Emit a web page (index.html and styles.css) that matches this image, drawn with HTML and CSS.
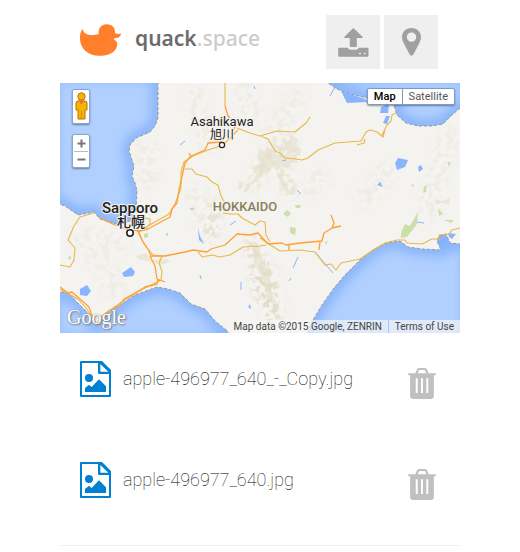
FILE: index.html
```html
<!DOCTYPE html>
<html lang="en">
    <head>
        <meta charset="UTF-8" />
        <meta name="viewport" content="width=device-width, initial-scale=1.0" />
        <title>quack.space</title>
        <link rel="stylesheet" href="styles.css">
    </head>
    <body>
        <div class="wrap">
            <!-- header -->
            <header class="top">
                <a class="logo" href="#">
                    <svg class="duck" viewBox="60 72 124 96" aria-hidden="true">
                        <path d="M68 87C70 98 78 104 90 105C98 106 108 104 117 102C114 88 122 72 141 72C156 72 166 83 166 94C166 98 165 99 168 100C174 102 180 102 184 100C183 110 176 113 168 114C162 116 161 118 166 121C171 124 174 130 172 138C168 157 146 168 118 168C88 168 62 150 60 118C59 105 62 94 68 87Z"/>
                    </svg>
                    <span class="name">quack<span class="ext">.space</span></span>
                </a>
                <nav class="tools">
                    <button class="tbtn" type="button" aria-label="Upload">
                        <svg width="31" height="29" viewBox="84 82 92 87">
                            <path d="M129 83Q131 83 133 85L157 108Q160 112 156 112H140V136Q140 139 137 139H122Q119 139 119 136V112H104Q100 112 103 108L126 85Q128 83 129 83Z"/>
                            <path fill-rule="evenodd" d="M87 141H113Q116 147 122 147H137Q143 147 146 141H172Q175 141 175 144V165Q175 168 172 168H87Q84 168 84 165V144Q84 141 87 141ZM147 156V161H152V156ZM161 156V161H166V156Z"/>
                        </svg>
                    </button>
                    <button class="tbtn" type="button" aria-label="Location">
                        <svg width="19" height="28" viewBox="275 86 56 83">
                            <path fill-rule="evenodd" d="M303 86C320 86 331 98 331 113C331 120 329 125 326 131L309 164Q303 172 297 164L280 131C277 125 275 120 275 113C275 98 286 86 303 86ZM303 99A14 14 0 1 0 303 127A14 14 0 1 0 303 99Z"/>
                        </svg>
                    </button>
                </nav>
            </header>

            <!-- map -->
            <section class="map">
                <svg class="land" viewBox="0 0 400 250" preserveAspectRatio="xMidYMid slice" role="img" aria-label="Map of Hokkaido">
                    <defs>
                        <path id="sea" d="M-9 -9H98V35L95 43L90 49L83 52L76 55L70 62L69 68L72 77L74 83L72 93L75 100L77 108L76 125L70 138L60 142L52 140L40 136L34 129L18 132L5 123L-9 118ZM-9 210L3 209L10 211L17 219L25 227L33 236L37 242L45 232L60 222L75 212L97 204L108 206L120 210L131 221L145 226L155 238L170 250V260H-9ZM247 260V250L253 237L262 222L274 205L285 192L300 177L313 167L327 160L340 158L348 164L362 166L381 167L377 158L379 153L386 151L390 160L409 162V260ZM268 -9V0L277 6L290 11L307 15L325 20L334 22L337 32L346 40L358 43L372 43L383 41L392 32L400 25H409V-9Z"/>
                        <clipPath id="seaClip"><use href="#sea"/></clipPath>
                        <filter id="soft" x="-20%" y="-20%" width="140%" height="140%"><feGaussianBlur stdDeviation="6"/></filter>
                        <filter id="blur" x="-20%" y="-20%" width="140%" height="140%"><feGaussianBlur stdDeviation="4"/></filter>
                        <!-- hill shading -->
                        <filter id="relief" x="0" y="0" width="100%" height="100%">
                            <feTurbulence type="fractalNoise" baseFrequency=".16" numOctaves="3" seed="8"/>
                            <feColorMatrix values="0 0 0 0 .76 0 0 0 0 .72 0 0 0 0 .58 8 0 0 0 -3.8"/>
                        </filter>
                        <mask id="hills">
                            <g fill="none" stroke="#fff" stroke-linecap="round" filter="url(#blur)">
                                <g opacity=".3" stroke-width="22">
                                    <path d="M85 65L90 95M135 15L150 60M135 110L150 150M35 170L55 205M235 15L210 55M185 5L190 30M260 95L250 105M325 90L305 115M388 55L370 125M20 155L60 160"/>
                                </g>
                                <path stroke-width="13" d="M192 160L198 205L214 240M206 180L218 225"/>
                                <path opacity=".7" stroke-width="16" d="M230 60L205 80L195 100M225 90L230 110M155 125L150 150"/>
                            </g>
                        </mask>
                    </defs>
                    <rect class="ground" x="-20" y="-20" width="440" height="290"/>
                    <g class="heath">
                        <path d="M200 65L204 70L207 63L211 68L216 65L217 72L224 73L228 67L231 72L240 68L236 75L238 80L231 80L228 86L222 83L217 88L213 84L207 91L203 90L198 98L191 101L189 107L183 110L187 101L193 98L196 92L193 86L200 80L197 74Z"/>
                        <path d="M222 54L228 58L232 53L238 56L236 62L241 66L240 73L234 69L230 72L226 65ZM216 90L222 92L226 102L232 112L226 108L220 98ZM192 158L198 160L202 175L210 190L212 210L220 228L214 224L206 212L202 195L194 180Z"/>
                        <path d="M179 99L184 98L182 105L178 107ZM76 173L86 170L91 177L108 176L110 179L101 182L92 179L78 176ZM375 116L382 118L390 115L389 122L382 120L376 121Z"/>
                    </g>
                    <rect width="400" height="250" filter="url(#relief)" mask="url(#hills)"/>
                    <g class="park">
                        <path d="M341 150L345 141L350 143L358 129L357 141L347 154L341 155ZM230 144L236 145L235 152L230 150ZM223 131L227 127L231 130L228 134ZM84 151L88 150L88 154L84 155ZM364 104L367 102L366 109L363 110ZM351 101L354 102L353 105ZM388 79L390 79L390 83L388 82ZM378 125L383 131L379 133ZM384 137L394 137L391 140ZM265 159L268 158L266 162ZM8 174L11 173L11 176L9 177ZM235 122L241 122L240 125L236 125Z"/>
                    </g>
                    <g class="lake">
                        <path d="M62 190L71 184L75 189L73 193L64 194ZM20 206L27 202L31 208L27 213L20 212ZM335 80L338 75L348 77L345 84L337 87ZM358 84L361 82L363 86L359 89ZM317 102L320 99L323 104ZM321 24L329 21L328 30L320 30ZM323 40L326 33L330 33L327 41ZM281 8L305 16L309 19L287 20ZM138 145L140 153L144 161L139 157ZM388 150L396 151L392 156L389 154ZM188 224L190 221L191 226Z"/>
                        <path class="river" d="M270 13L275 4M120 62L125 58M194 3L195 6M107 150V153M140 192L141 196M181 199V207M229 198L231 195M222 78L226 77M237 107L241 111M233 185L238 174M357 139L364 140M255 169L273 190M170 142L176 138M130 126H134"/>
                    </g>
                    <use class="water" href="#sea"/>
                    <g clip-path="url(#seaClip)"><use class="shallow" href="#sea" filter="url(#soft)"/></g>
                    <use class="coast" href="#sea"/>

                    <!-- roads -->
                    <path class="road" d="M165 0V23M177 45L190 50L200 53L217 48L235 49L246 40L250 34M200 53L208 56L215 68L220 70L225 75L236 76L242 77L248 75L258 67L275 60L301 58L306 49L310 47L317 49L323 54L325 47M297 62L304 60L305 56M322 52L327 42L331 38L332 32L336 30M178 47L163 62L148 67L133 73L124 79L121 89L121 105L115 121L109 131L88 143L78 149M125 86L132 86L136 91L147 94L152 99L158 102L161 113L165 120M163 130L170 131L178 131L182 135L195 142L200 138L205 139L206 152L210 159M34 130L20 134L14 143L8 157L15 165L14 177L10 184L0 182M138 169L142 174L152 172L160 174L170 172L183 164L200 163L206 162M200 155L212 163L220 168L240 167L255 169L265 182L271 181L276 187L281 180L295 177L300 176L313 167L325 160L337 157L345 157L347 160L362 161L372 156L379 156L379 152L389 151L392 147L400 145M85 135L90 136L90 141L84 147M76 145L84 161L93 172L102 173L99 180L102 188L101 197L83 206L63 218L45 231L39 241M34 237L26 225L18 216L0 206"/>
                    <path class="highway" d="M165 23L168 33L176 42L171 51M162 59L148 60L145 67L131 73L125 80L119 107L117 120L112 126L110 134L88 146L80 148L66 146L55 142L40 135M129 70L131 74M78 147L82 157L89 168L91 173L105 173L125 169L133 167L147 169L151 166L165 162L177 151L190 152L198 150L208 161L222 160L226 162L240 160L262 158L264 150L272 145L281 143M272 145L274 140L271 132M260 159L259 167M229 162V167M90 173L95 183L97 196L105 199M98 196L97 201L85 204L75 210L64 216L60 222L50 227L42 233L36 243M34 238L29 224L20 216L12 209L8 210L0 204"/>

                    <!-- places -->
                    <circle class="dot" cx="162" cy="62" r="2.6"/>
                    <circle class="dot big" cx="70" cy="150" r="3.2"/>
                    <g class="place">
                        <text class="kanji" x="162" y="56">旭川</text>
                        <text x="162" y="43">Asahikawa</text>
                        <text class="kanji city" x="71" y="144">札幌</text>
                        <text class="city" x="70" y="130">Sapporo</text>
                        <text class="region" x="185" y="128">HOKKAIDO</text>
                    </g>
                </svg>

                <div class="pan">
                    <button class="pegman" type="button" aria-label="Street View">
                        <svg width="13" height="29" viewBox="0 0 13 29">
                            <g fill="#f5b400" stroke="#bb7004">
                                <path d="M3 9H10Q12 9 12 11V18H10V27H3V18H1V11Q1 9 3 9Z"/>
                                <circle cx="6.500" cy="4.500" r="3.700"/>
                            </g>
                            <path fill="#e76f51" d="M3.500 8.500H9.500L6.500 12.500Z"/>
                            <path stroke="#d88a05" d="M6.500 19V27"/>
                        </svg>
                    </button>
                    <div class="zoom">
                        <button type="button" aria-label="Zoom in">
                            <svg width="9" height="9" viewBox="0 0 9 9"><path d="M.5 4.500H8.500M4.500 .5V8.500"/></svg>
                        </button>
                        <button type="button" aria-label="Zoom out">
                            <svg width="9" height="9" viewBox="0 0 9 9"><path d="M.5 4.500H8.500"/></svg>
                        </button>
                    </div>
                </div>

                <div class="types">
                    <button class="on" type="button">Map</button>
                    <button type="button">Satellite</button>
                </div>

                <a class="google" href="#">Google</a>
                <div class="credit">
                    <span>Map data ©2015 Google, ZENRIN</span>
                    <a href="#">Terms of Use</a>
                </div>
            </section>

            <!-- file list -->
            <svg class="defs" aria-hidden="true">
                <symbol id="pic" viewBox="60 48 93 108">
                    <path fill-rule="evenodd" d="M63 48H126L153 75V153Q153 156 150 156H63Q60 156 60 153V51Q60 48 63 48ZM66 54V150H147V87H117Q114 87 114 84V54ZM121 57V80H145Z"/>
                    <circle cx="87" cy="99" r="12"/>
                    <path d="M75 141V129L87 119L95 126L117 103L138 124V141Z"/>
                </symbol>
                <symbol id="bin" viewBox="54 53 84 94">
                    <path fill-rule="evenodd" d="M76 69L80 58Q82 53 87 53H105Q110 53 112 58L116 69H138V75H132V137Q132 147 122 147H70Q60 147 60 137V75H54V69ZM83 69H109L106 61Q105 59 103 59H89Q87 59 86 61ZM77 84V129H83V84ZM93 84V129H99V84ZM109 84V129H115V84Z"/>
                </symbol>
            </svg>
            <ul class="files">
                <li class="file">
                    <svg class="pic"><use href="#pic"/></svg>
                    <a class="fname" href="#">apple-496977_640_-_Copy.jpg</a>
                    <button class="del" type="button" aria-label="Delete apple-496977_640_-_Copy.jpg"><svg class="bin"><use href="#bin"/></svg></button>
                </li>
                <li class="file">
                    <svg class="pic"><use href="#pic"/></svg>
                    <a class="fname" href="#">apple-496977_640.jpg</a>
                    <button class="del" type="button" aria-label="Delete apple-496977_640.jpg"><svg class="bin"><use href="#bin"/></svg></button>
                </li>
            </ul>
        </div>
    </body>
</html>
```
FILE: styles.css
```css
* {
    box-sizing: border-box;
}
body {
    margin: 0;
    background: #fff;
    font-family: Roboto, "Noto Sans CJK JP", sans-serif;
}
button {
    margin: 0;
    padding: 0;
    border: 0;
    background: none;
    font: inherit;
    cursor: pointer;
}
a {
    color: inherit;
    text-decoration: none;
}
svg {
    display: block;
}
.wrap {
    max-width: 400px;
    margin: 0 auto;
}

/* header */
.top {
    display: flex;
    justify-content: space-between;
    padding: 15px 22px 14px 20px;
}
.logo {
    display: flex;
    align-items: center;
    gap: 14px;
    height: 50px;
}
.duck {
    width: 41px;
    height: 32px;
    fill: #ff7f2a;
}
.name {
    padding-bottom: 4px;
    color: #6c6c6c;
    font: 600 21px/30px "Noto Sans", sans-serif;
}
.ext {
    color: #ccc;
    font-weight: 500;
}
.tools {
    display: flex;
    gap: 4px;
}
.tbtn {
    display: flex;
    align-items: center;
    justify-content: center;
    width: 54px;
    height: 54px;
    background: #efefef;
    fill: #a0a0a0;
}

/* map */
.map {
    position: relative;
    height: 250px;
    overflow: hidden;
    background: #f4f3f0;
}
.land {
    width: 100%;
    height: 100%;
}
.ground {
    fill: #f4f3f0;
}
.heath {
    fill: #ebe7d8;
}
.park {
    fill: #cadfaa;
}
.lake {
    fill: #8ab4ff;
}
.river {
    fill: none;
    stroke: #8ab4ff;
}
.water {
    fill: #b1d0ff;
}
.shallow {
    fill: none;
    stroke: #83b0fa;
    stroke-width: 12;
}
.coast {
    fill: none;
    stroke: #999;
    stroke-dasharray: 3 2;
}
.road,
.highway {
    fill: none;
    stroke: #e8b84a;
    stroke-linejoin: round;
    stroke-width: 1.1;
}
.highway {
    stroke: #ffa033;
    stroke-width: 1.3;
}
.dot {
    fill: #fff;
    stroke: #222;
    stroke-width: 1.2;
}
.big {
    stroke-width: 1.6;
}
.place {
    fill: #222;
    stroke: #f4f3f0;
    stroke-width: 2;
    paint-order: stroke;
    font-size: 13px;
    text-anchor: middle;
}
.city {
    font-size: 15px;
    font-weight: 500;
}
.kanji {
    font-size: 12px;
}
.kanji.city {
    font-size: 14px;
}
.region {
    fill: #8b7d5b;
    font-weight: 500;
}

/* map controls */
.pan {
    position: absolute;
    top: 6px;
    left: 12px;
    display: flex;
    flex-direction: column;
    gap: 10px;
}
.pegman,
.zoom {
    width: 18px;
    border: 1px solid #8aa6cf;
    border-radius: 2px;
    background: #fff;
    box-shadow: 0 1px 2px rgba(0, 0, 0, 0.4);
}
.pegman {
    display: flex;
    align-items: center;
    justify-content: center;
    height: 35px;
}
.zoom button {
    display: flex;
    align-items: center;
    justify-content: center;
    width: 14px;
    height: 16px;
    margin: 0 auto;
    fill: none;
    stroke: #777;
    stroke-width: 2;
}
.zoom button + button {
    border-top: 1px solid #bbb;
}
.types {
    position: absolute;
    top: 5px;
    right: 5px;
    display: flex;
    border: 1px solid #7f9bc4;
    border-radius: 2px;
    background: #fff;
    box-shadow: 0 1px 2px rgba(0, 0, 0, 0.4);
}
.types button {
    padding: 0 6px;
    color: #565656;
    font-size: 11px;
    line-height: 15px;
}
.types .on {
    color: #000;
    font-weight: 500;
}
.types button + button {
    border-left: 1px solid #7f9bc4;
}
.google {
    position: absolute;
    bottom: 2px;
    left: 7px;
    color: #fff;
    font: 20px/28px "Liberation Serif", serif;
    text-shadow: 0 0 1px #777, 1px 1px 2px #777;
}
.credit {
    position: absolute;
    right: 0;
    bottom: 0;
    display: flex;
    background: rgba(245, 245, 245, 0.7);
    color: #444;
    font-size: 10px;
    line-height: 13px;
}
.credit span,
.credit a {
    padding: 0 6px;
}
.credit a {
    border-left: 1px solid #a9c6f2;
}

/* file list */
.defs {
    position: absolute;
    width: 0;
    height: 0;
}
.files {
    margin: 0;
    padding: 0 0 10px;
    border-bottom: 1px solid #eee;
    list-style: none;
}
.file {
    display: flex;
    align-items: flex-start;
    gap: 12px;
    min-height: 101px;
    padding: 28px 24px 0 20px;
}
.pic {
    flex: none;
    width: 31px;
    height: 36px;
    fill: #0080d0;
}
.fname {
    flex: 1;
    color: #000;
    font-size: 18px;
    font-weight: 100;
    line-height: 36px;
}
.del {
    padding-top: 7px;
}
.bin {
    width: 28px;
    height: 31px;
    fill: #c0c0c0;
}
```
